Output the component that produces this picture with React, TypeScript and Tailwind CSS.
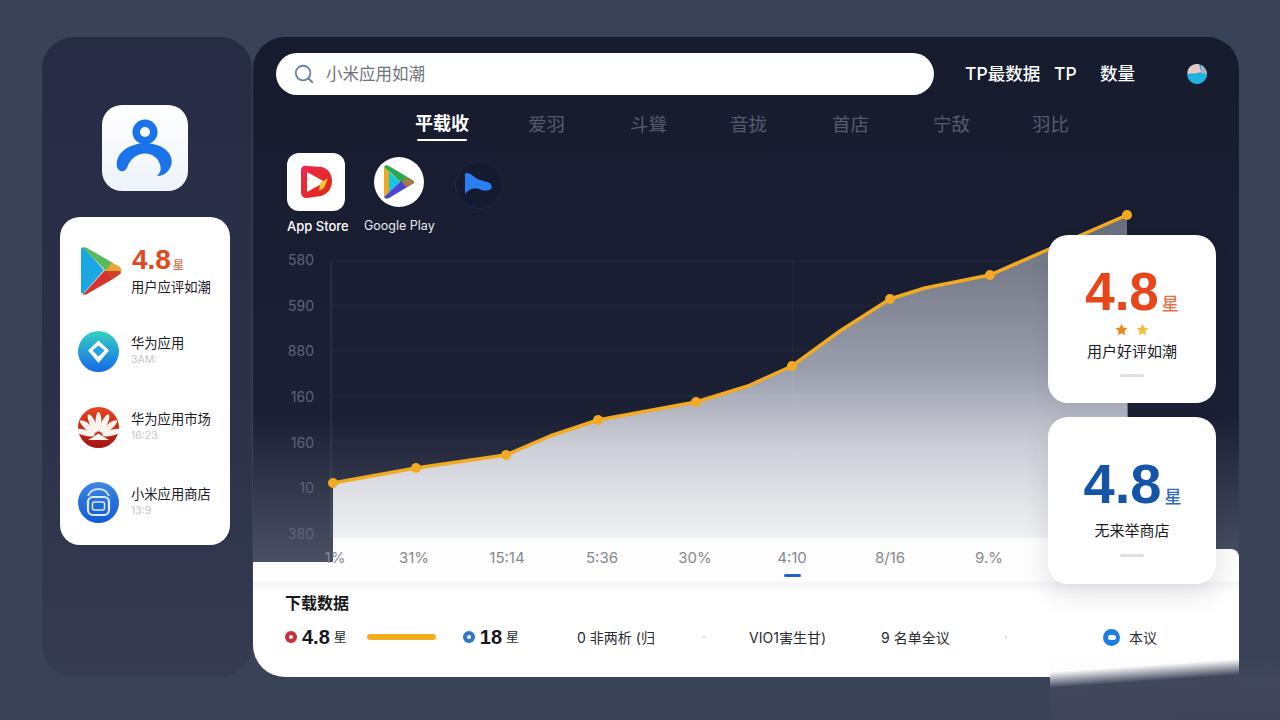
import { Search } from "lucide-react";

const font = "font-['Inter','Noto_Sans_CJK_SC',sans-serif]";
const numFont = "font-['Liberation_Sans','Noto_Sans_CJK_SC',sans-serif]";

const tabs = [
  { label: "爱羽", cls: "ml-[59px]" },
  { label: "斗聳", cls: "ml-[65px]" },
  { label: "音拢", cls: "ml-[63px]" },
  { label: "首店", cls: "ml-[65px]" },
  { label: "宁敌", cls: "ml-[64px]" },
  { label: "羽比", cls: "ml-[62px]" },
];

const yLabels = ["580", "590", "880", "160", "160", "10", "380"];

const xLabels = [
  { label: "1%", cls: "ml-[52px]" },
  { label: "31%", cls: "ml-[19px]" },
  { label: "15:14", cls: "ml-[33px]" },
  { label: "5:36", cls: "ml-[35px]" },
  { label: "30%", cls: "ml-[33px]" },
  { label: "4:10", cls: "ml-[37px]", active: true },
  { label: "8/16", cls: "ml-[38px]" },
  { label: "9.%", cls: "ml-[39px]" },
];

const points: [number, number][] = [
  [333, 483],
  [416, 468],
  [506, 455],
  [598, 420],
  [696, 402],
  [792, 366],
  [890, 299],
  [990, 275],
  [1127, 215],
];

// extra points only bend the line a little between the dots
const linePoints: [number, number][] = [
  [333, 483],
  [416, 468],
  [506, 455],
  [550, 436],
  [598, 420],
  [696, 402],
  [748, 386],
  [792, 366],
  [840, 331],
  [890, 299],
  [925, 288],
  [990, 275],
  [1127, 215],
];

function PersonLogo() {
  return (
    <svg width="86" height="86" viewBox="0 0 86 86" fill="none">
      <circle cx="43" cy="27" r="8.800" stroke="#1a73ea" strokeWidth="7.500" />
      <path
        d="M14.700 58C16 46 29 38.300 43 38.300C58 38.300 70 46 69.700 57C69 65 63 71 55 71C57 69 59 66 58.700 63C58 54 51 48.500 43 48.500C35 48.500 28 54 25.500 61.700C24 66 20 67 17.500 65.500C15 64 14.500 61 14.700 58Z"
        fill="#1a73ea"
      />
    </svg>
  );
}

function PlayIcon() {
  return (
    <svg width="42" height="48" viewBox="0 0 42 48">
      <path d="M1 3C1 1 2 0 4 1L24 23L3 47C2 47 1 46 1 44Z" fill="#1ba7e2" />
      <path d="M3 0.500C4 0 5 0 7 1L33 16L26 24Z" fill="#5cb85c" />
      <path d="M3 47.500C4 48 5 48 7 47L33 32L25 23Z" fill="#d8322f" />
      <path d="M32 15.500L40 20C42 22 42 25 40 27L33 32L25 24Z" fill="#e9a531" />
      <path d="M24 24L40 24C41 25 41 26 40 27L33 32Z" fill="#d2402c" />
    </svg>
  );
}

function DiamondIcon() {
  return (
    <svg width="41" height="41" viewBox="0 0 41 41">
      <defs>
        <linearGradient id="dg" x1="0" y1="0" x2="0" y2="1">
          <stop offset="0" stopColor="#33d3c0" />
          <stop offset="1" stopColor="#1668e8" />
        </linearGradient>
      </defs>
      <circle cx="20.500" cy="20.500" r="20.500" fill="url(#dg)" />
      <path d="M20.500 9.500L31 19.500L20.500 32L10 19.500Z" fill="#ffffff" />
      <path d="M20.500 14.500L26.500 19.500L20.500 25.500L14.500 19.500Z" fill="#21a3ea" />
    </svg>
  );
}

function HuaweiIcon() {
  return (
    <svg width="41" height="41" viewBox="0 0 41 41">
      <defs>
        <linearGradient id="hg" x1="0" y1="0" x2="0" y2="1">
          <stop offset="0" stopColor="#e8431d" />
          <stop offset="1" stopColor="#a61412" />
        </linearGradient>
      </defs>
      <circle cx="20.500" cy="20.500" r="20.500" fill="url(#hg)" />
      {[-76, -50, -25, 0, 25, 50, 76].map((a) => (
        <ellipse key={a} cx="20.500" cy="15" rx="3" ry="10" fill="#fff4ee" transform={`rotate(${a} 20.500 29)`} />
      ))}
      <path d="M10 33L20.500 26.500L31 33Z" fill="#fff4ee" />
    </svg>
  );
}

function StoreIcon() {
  return (
    <svg width="41" height="41" viewBox="0 0 41 41" fill="none">
      <defs>
        <linearGradient id="sg" x1="0" y1="0" x2="0" y2="1">
          <stop offset="0" stopColor="#3f87e0" />
          <stop offset="1" stopColor="#1358d8" />
        </linearGradient>
      </defs>
      <circle cx="20.500" cy="20.500" r="20.500" fill="url(#sg)" />
      <path d="M10 14C12 9 16 7 20.500 7C25 7 29 9 31 14" stroke="#cfe2fb" strokeWidth="2" />
      <rect x="10" y="15" width="21" height="18" rx="5" stroke="#dcebfd" strokeWidth="2.200" />
      <rect x="14.500" y="20" width="12" height="8" rx="2" fill="#1f66d8" stroke="#dcebfd" strokeWidth="1.500" />
    </svg>
  );
}

function AppStoreTile() {
  return (
    <svg width="36" height="36" viewBox="0 0 36 36">
      <defs>
        <linearGradient id="ag" x1="0" y1="0" x2="1" y2="1">
          <stop offset="0" stopColor="#f02a50" />
          <stop offset="1" stopColor="#e0280f" />
        </linearGradient>
      </defs>
      <path d="M3 7C3 3 5 1 10 2L24 3C31 5 34 11 34 17C34 24 30 30 23 32L9 34C5 34 3 32 3 28Z" fill="url(#ag)" />
      <path d="M9 8L27 18L9 28Z" fill="#ffffff" />
      <path d="M22 19L30 14L26 24L21 27Z" fill="#f7c531" />
    </svg>
  );
}

function GooglePlayRound() {
  return (
    <svg width="32" height="34" viewBox="0 0 32 34">
      <path d="M1 2L17 17L1 32Z" fill="#12c8e8" />
      <path d="M1 2C2 0 4 0 6 1L31 16L25 20L17 17L9 9Z" fill="#2ca84f" />
      <path d="M1 32C2 34 4 34 6 33L31 18L25 14L17 17Z" fill="#4b45d0" />
      <path d="M1 2L6 7L6 27L1 32Z" fill="#f0a818" />
      <path d="M22 13L31 16L31 18L23 22L19 17Z" fill="#a8783c" />
    </svg>
  );
}

function BlueWave() {
  return (
    <svg width="48" height="48" viewBox="0 0 48 48">
      <circle cx="24" cy="24" r="23.500" fill="#141a2f" stroke="#1e2a48" />
      <path d="M10 13C11 11 14 12 17 14C20 17 24 19 32 21C36 22 38 25 36 28C33 30 28 30 24 28C19 26 14 28 10 33Z" fill="#2a80f0" />
    </svg>
  );
}

function Avatar() {
  return (
    <svg width="20" height="20" viewBox="0 0 20 20">
      <circle cx="10" cy="10" r="10" fill="#2fa3d6" />
      <path d="M4 2C7 0 10 0 12 0L14 8C10 10 5 9 1 10C0 7 2 3 4 2Z" fill="#e3c9c2" />
      <path d="M14 1C17 2 20 6 20 10L14 10Z" fill="#9fb4bb" />
      <path d="M1 11C5 10 10 11 15 9L20 11C19 16 15 20 10 20C5 20 2 16 1 11Z" fill="#1fb4e0" />
    </svg>
  );
}

function Star({ className }: { className: string }) {
  return (
    <svg width="13" height="13" viewBox="0 0 24 24" className={className}>
      <path d="M12 1.500L15.300 8.500L23 9.500L17.400 14.800L18.800 22.500L12 18.800L5.200 22.500L6.600 14.800L1 9.500L8.700 8.500Z" fill="currentColor" />
    </svg>
  );
}

function Ring({ outer, inner }: { outer: string; inner: string }) {
  return (
    <span className={`flex h-3 w-3 items-center justify-center rounded-full ${outer}`}>
      <span className={`h-1 w-1 rounded-full ${inner}`} />
    </span>
  );
}

function SideRow({ icon, title, sub, className }: { icon: React.ReactNode; title: string; sub: string; className: string }) {
  return (
    <div className={`flex items-center ${className}`}>
      <div className="w-[53px] shrink-0">{icon}</div>
      <div className="-mt-[3px]">
        <div className="text-[13.300px] leading-[18px] text-[#1a1a1f]">{title}</div>
        <div className="mt-[1px] text-[10.500px] leading-[14px] text-[#c4c6ca]">{sub}</div>
      </div>
    </div>
  );
}

export default function App() {
  return (
    <div className={`relative flex h-[720px] w-[1280px] overflow-hidden bg-[#3a4258] pl-[42px] pt-[37px] ${font}`}>
      <aside className="flex h-[640px] w-[210px] shrink-0 flex-col items-center rounded-[32px] bg-[linear-gradient(180deg,#262c43,#2b3148_55%,#353c52)] pr-[4px] pt-[68px]">
        <div className="h-[86px] w-[86px] rounded-[20px] bg-[linear-gradient(180deg,#ffffff,#eef3fa)]">
          <PersonLogo />
        </div>
        <div className="mt-[26px] h-[328px] w-[170px] rounded-[20px] bg-white pl-[18px] pt-[28px]">
          <div className="flex items-center pl-[2px]">
            <div className="w-[51px] shrink-0">
              <PlayIcon />
            </div>
            <div>
              <div className={`flex items-baseline pl-[1px] ${numFont}`}>
                <span className="text-[28px] font-bold leading-[30px] text-[#e2481c]">4.8</span>
                <span className="ml-[2px] text-[11px] font-medium text-[#e8734a]">星</span>
              </div>
              <div className="mt-[3px] text-[13.300px] leading-[18px] text-[#1a1a1f]">用户应评如潮</div>
            </div>
          </div>
          <SideRow className="mt-[35px]" icon={<DiamondIcon />} title="华为应用" sub="3AM:" />
          <SideRow className="mt-[35px]" icon={<HuaweiIcon />} title="华为应用市场" sub="16:23" />
          <SideRow className="mt-[34px]" icon={<StoreIcon />} title="小米应用商店" sub="13:9" />
        </div>
      </aside>

      <main className="relative ml-px flex h-[640px] w-[986px] shrink-0 flex-col overflow-hidden rounded-[32px] rounded-br-none bg-[linear-gradient(180deg,#171b2e_0,#1b2035_380px,#4a5064_525px)]">
        <div className="flex items-center pl-[23px] pt-[16px]">
          <div className="flex h-[42px] w-[658px] items-center rounded-full bg-white pl-[17px]">
            <Search className="h-[22px] w-[22px] text-[#6d80a8]" strokeWidth={2} />
            <span className="ml-[11px] text-[16.500px] text-[#6f747c]">小米应用如潮</span>
          </div>
          <div className="ml-[31px] flex items-center text-[17.500px] font-medium text-white">
            <span className="w-[89px]">TP最数据</span>
            <span className="w-[46px]">TP</span>
            <span className="w-[87px]">数量</span>
            <Avatar />
          </div>
        </div>

        <div className="flex h-[47px] items-start pl-[162px] pt-[17px] text-[18.500px] leading-[24px] text-[#565c6e]">
          <div className="flex w-[54px] flex-col items-center">
            <span className="whitespace-nowrap text-[18px] font-bold text-white">平载收</span>
            <span className="mt-[3px] h-[2px] w-[50px] rounded bg-white" />
          </div>
          {tabs.map((t) => (
            <span key={t.label} className={t.cls}>
              {t.label}
            </span>
          ))}
        </div>

        <div className="h-[98px] pl-[34px] pt-[11px]">
          <div className="flex items-center">
            <div className="flex h-[58px] w-[58px] items-center justify-center rounded-[12px] bg-white">
              <AppStoreTile />
            </div>
            <div className="ml-[29px] flex h-[50px] w-[50px] items-center justify-center rounded-full bg-white">
              <GooglePlayRound />
            </div>
            <div className="ml-[31px] mt-[5px]">
              <BlueWave />
            </div>
          </div>
          <div className="mt-[5px] flex text-[13px] leading-[20px]">
            <span className="w-[77px] font-medium text-white">App Store</span>
            <span className="text-[12.500px] text-[#e8eaf0]">Google Play</span>
          </div>
        </div>

        <div className="flex h-[298px] shrink-0">
          <div className="flex w-[80px] shrink-0 flex-col gap-[23.670px] pr-[19px] pt-[9px] text-right text-[14px] leading-[22px] text-[#5f6476]">
            {yLabels.map((l, i) => (
              <span key={i}>{l}</span>
            ))}
          </div>
          <svg width="906" height="298" viewBox="333 240 906 298" className="overflow-visible">
            <defs>
              <linearGradient id="area" gradientUnits="userSpaceOnUse" x1="0" y1="215" x2="0" y2="538">
                <stop offset="0" stopColor="#666b7a" />
                <stop offset="0.47" stopColor="#989cab" />
                <stop offset="0.73" stopColor="#cfd1d9" />
                <stop offset="1" stopColor="#f0f1f3" />
              </linearGradient>
            </defs>
            <polygon points={`333,538 ${linePoints.map((p) => p.join(",")).join(" ")} 1128,538`} fill="url(#area)" />
            {[261, 306, 351, 396, 441].map((y) => (
              <line key={y} x1="331" x2="1128" y1={y} y2={y} stroke="#ffffff" strokeOpacity="0.05" strokeWidth="1" />
            ))}
            <line x1="331" x2="331" y1="261" y2="538" stroke="#ffffff" strokeOpacity="0.12" />
            <line x1="793" x2="793" y1="261" y2="538" stroke="#ffffff" strokeOpacity="0.05" />
            <polyline points={linePoints.map((p) => p.join(",")).join(" ")} fill="none" stroke="#f2aa22" strokeWidth="3.500" strokeLinejoin="round" />
            {points.map(([x, y]) => (
              <circle key={x} cx={x} cy={y} r="5" fill="#f2aa22" />
            ))}
          </svg>
        </div>

        <div className="relative h-[44px] shrink-0">
          <div className="absolute inset-y-0 left-[80px] right-[23px] bg-[#fdfdfd]" />
          <div className="absolute inset-x-0 bottom-0 top-[24px] bg-[#fdfdfd]" />
          <div className="absolute bottom-0 right-0 top-[11px] w-[23px] rounded-tr-[8px] bg-[#fdfdfd]" />
          <div className="relative flex items-start pt-[11px] text-[15px] leading-[18px] text-[#85888f]">
            {xLabels.map((x) => (
              <div key={x.label} className={`w-[60px] text-center ${x.cls}`}>
                {x.label}
                {x.active && <div className="mx-auto mt-[7px] h-[3px] w-[17px] rounded-full bg-[#1f5fc8]" />}
              </div>
            ))}
          </div>
        </div>

        <section className="h-[95px] shrink-0 bg-[linear-gradient(180deg,#f4f5f6,#ffffff_12px)] pl-[32px] pt-[10px]">
          <h2 className="text-[16px] font-semibold leading-[22px] text-[#17181c]">下载数据</h2>
          <div className="mt-[11px] flex h-[24px] w-[932px] items-center text-[14px] text-[#2a2b30]">
            <Ring outer="bg-[#c93038]" inner="bg-white" />
            <span className={`ml-[5px] text-[20px] font-bold text-[#17181c] ${numFont}`}>4.8</span>
            <span className="ml-[4px] text-[13px]">星</span>
            <span className="ml-[20px] h-[6px] w-[69px] rounded-full bg-[#f2ae1e]" />
            <span className="ml-[27px]">
              <Ring outer="bg-[#2f79c4]" inner="bg-white" />
            </span>
            <span className={`ml-[5px] text-[20px] font-bold text-[#17181c] ${numFont}`}>18</span>
            <span className="ml-[4px] text-[13px]">星</span>
            <span className="ml-[58px] w-[126px]">0 非两析 (归</span>
            <span className="h-[2px] w-[2px] rounded-full bg-[#c8c9cc]" />
            <span className="ml-[44px] w-[132px]">VIO1害生甘)</span>
            <span className="w-[124px]">9 名单全议</span>
            <span className="h-[2px] w-[2px] rounded-full bg-[#c8c9cc]" />
            <span className="w-[96px]" />
            <span className="flex h-[17px] w-[17px] items-center justify-center rounded-full bg-[#1a7fde]">
              <span className="h-[5px] w-[8px] rounded-full bg-white" />
            </span>
            <span className="ml-[9px]">本议</span>
          </div>
        </section>

        <div className="absolute right-[23px] top-[198px] flex w-[168px] flex-col gap-[14px]">
          <div className="flex h-[168px] flex-col items-center rounded-[20px] bg-white pt-[28px] shadow-[0_8px_20px_rgba(30,35,60,0.08)]">
            <div className={`flex items-baseline ${numFont}`}>
              <span className="text-[53px] font-bold leading-[58px] text-[#e8451a]">4.8</span>
              <span className="ml-[3px] text-[17px] font-medium text-[#e8734a]">星</span>
            </div>
            <div className="mt-[2px] flex gap-[8px]">
              <Star className="text-[#e58a20]" />
              <Star className="text-[#f2c040]" />
            </div>
            <div className="mt-[5px] text-[15px] leading-[22px] text-[#1a1a1f]">用户好评如潮</div>
            <div className="mt-[11px] h-[3px] w-[24px] rounded-full bg-[#dfe0e3]" />
          </div>
          <div className="flex h-[167px] flex-col items-center rounded-[20px] bg-white pt-[37px] shadow-[0_10px_26px_rgba(30,35,60,0.13)]">
            <div className={`flex items-baseline pl-[1px] ${numFont}`}>
              <span className="text-[56px] font-bold leading-[60px] text-[#1554a6]">4.8</span>
              <span className="ml-[3px] text-[17px] font-medium text-[#2f6cb8]">星</span>
            </div>
            <div className="mt-[6px] text-[15px] leading-[22px] text-[#1a1a1f]">无来举商店</div>
            <div className="mt-[12px] h-[3px] w-[24px] rounded-full bg-[#dfe0e3]" />
          </div>
        </div>
      </main>

      {/* smudged patch over the bottom right corner */}
      <div className="pointer-events-none absolute left-[1050px] top-[658px] h-[62px] w-[189px] bg-[linear-gradient(176deg,#fdfdfd_14px,#40475b_30px,#3d4459_100%)]" />
      <div className="pointer-events-none absolute left-[1239px] top-[658px] h-[62px] w-[41px] bg-[linear-gradient(180deg,rgba(64,71,91,0),#40475b_20px,#3d4459_100%)]" />
    </div>
  );
}
